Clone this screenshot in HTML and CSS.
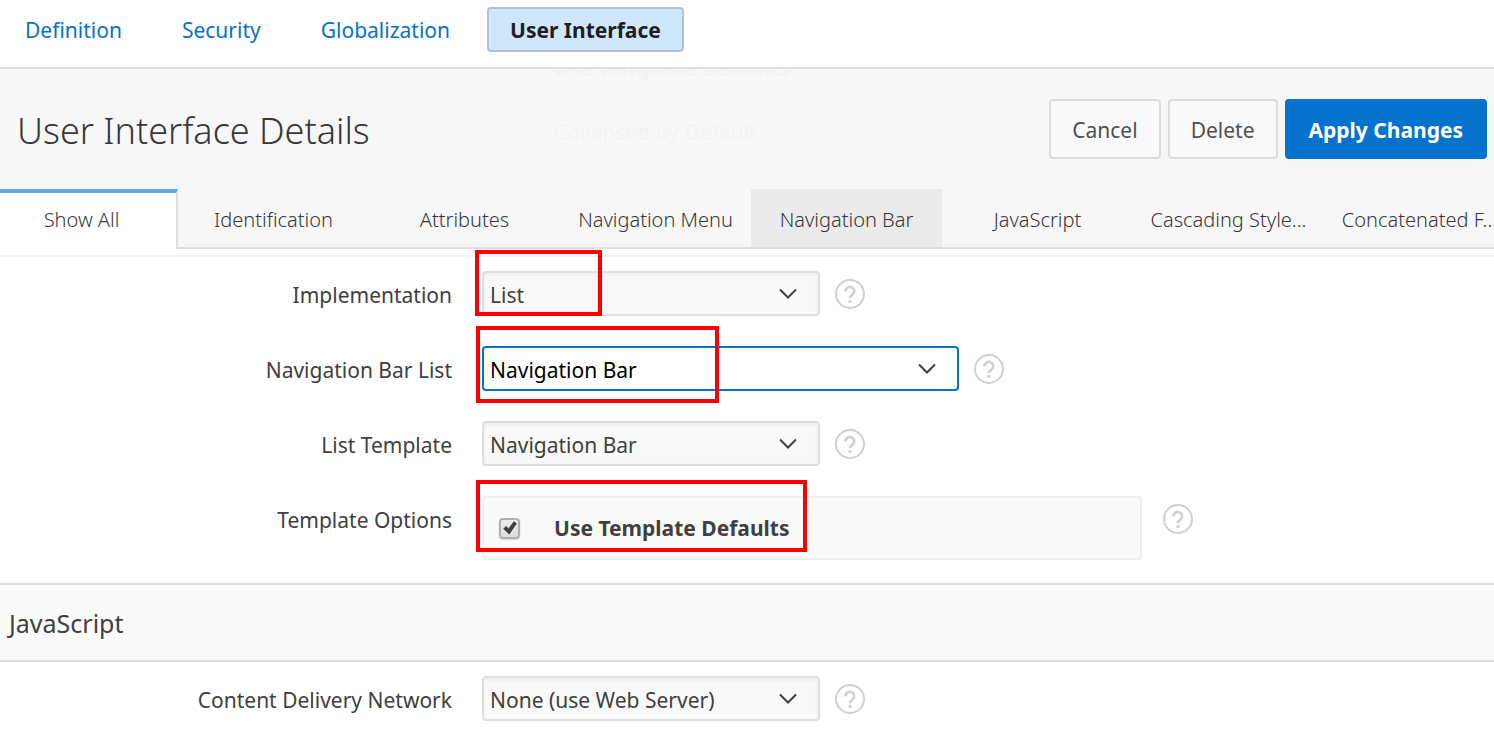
FILE: index.html
```html
<!DOCTYPE html>
<html lang="en">
<head>
    <meta charset="UTF-8">
    <meta name="viewport" content="width=device-width, initial-scale=1.0">
    <title>User Interface Details</title>
    <link rel="stylesheet" href="styles.css">
</head>
<body>
    <!-- Shared icons -->
    <svg class="sprite" width="0" height="0" aria-hidden="true">
        <symbol id="icon-help" viewBox="0 0 32 32">
            <circle cx="16" cy="16" r="14" fill="none" stroke="currentColor" stroke-width="2"/>
            <path d="M11.6 13.4a4.3 4.3 0 1 1 7 3.1c-1.6 1.2-2.6 1.7-2.6 3.7" fill="none" stroke="currentColor" stroke-width="2.6"/>
            <circle cx="16" cy="23.4" r="1.7" fill="currentColor"/>
        </symbol>
        <symbol id="icon-down" viewBox="0 0 18 12">
            <path d="M1 1.5l8 8 8-8" fill="none" stroke="currentColor" stroke-width="2"/>
        </symbol>
        <symbol id="icon-check" viewBox="0 0 14 14">
            <path d="M.2 7.8l3-2.7 2.3 2.4L10.9.2l3 2.2L6.3 13.4z" fill="currentColor"/>
        </symbol>
    </svg>

    <nav class="top-nav">
        <a href="#definition">Definition</a>
        <a href="#security">Security</a>
        <a href="#globalization">Globalization</a>
        <a href="#ui" class="active">User Interface</a>
    </nav>

    <header class="page-header">
        <!-- Form content scrolled under the translucent header -->
        <div class="scrolled" aria-hidden="true">
            <div class="scrolled-row"><span class="scrolled-box"></span><b>Use Template Defaults</b></div>
            <div class="scrolled-row"><span class="scrolled-box"></span>Collapsed by Default</div>
        </div>
        <div class="title-bar">
            <h1>User Interface Details</h1>
            <div class="actions">
                <button type="button" class="btn">Cancel</button>
                <button type="button" class="btn">Delete</button>
                <button type="button" class="btn btn-hot">Apply Changes</button>
            </div>
        </div>
        <nav class="tabs">
            <a href="#all" class="selected">Show All</a>
            <a href="#identification">Identification</a>
            <a href="#attributes">Attributes</a>
            <a href="#nav-menu">Navigation Menu</a>
            <a href="#nav-bar" class="hover">Navigation Bar</a>
            <a href="#javascript">JavaScript</a>
            <a href="#css">Cascading Style...</a>
            <a href="#files">Concatenated F...</a>
        </nav>
    </header>

    <main>
        <section class="region" id="nav-bar">
            <div class="field">
                <label for="implementation">Implementation</label>
                <div class="control">
                    <div class="select">
                        <select id="implementation"><option>List</option></select>
                        <svg><use href="#icon-down"/></svg>
                    </div>
                    <button type="button" class="help" aria-label="Help"><svg><use href="#icon-help"/></svg></button>
                    <span class="mark mark-implementation"></span>
                </div>
            </div>
            <div class="field">
                <label for="bar-list">Navigation Bar List</label>
                <div class="control">
                    <div class="select select-wide focused">
                        <select id="bar-list"><option>Navigation Bar</option></select>
                        <svg><use href="#icon-down"/></svg>
                    </div>
                    <button type="button" class="help" aria-label="Help"><svg><use href="#icon-help"/></svg></button>
                    <span class="mark mark-list"></span>
                </div>
            </div>
            <div class="field">
                <label for="template">List Template</label>
                <div class="control">
                    <div class="select">
                        <select id="template"><option>Navigation Bar</option></select>
                        <svg><use href="#icon-down"/></svg>
                    </div>
                    <button type="button" class="help" aria-label="Help"><svg><use href="#icon-help"/></svg></button>
                </div>
            </div>
            <div class="field">
                <span class="label">Template Options</span>
                <div class="control">
                    <div class="options">
                        <span class="checkbox">
                            <input type="checkbox" id="defaults" checked>
                            <svg><use href="#icon-check"/></svg>
                        </span>
                        <label for="defaults">Use Template Defaults</label>
                    </div>
                    <button type="button" class="help" aria-label="Help"><svg><use href="#icon-help"/></svg></button>
                    <span class="mark mark-options"></span>
                </div>
            </div>
        </section>

        <section class="region" id="javascript">
            <h2>JavaScript</h2>
            <div class="field">
                <label for="cdn">Content Delivery Network</label>
                <div class="control">
                    <div class="select">
                        <select id="cdn"><option>None (use Web Server)</option></select>
                        <svg><use href="#icon-down"/></svg>
                    </div>
                    <button type="button" class="help" aria-label="Help"><svg><use href="#icon-help"/></svg></button>
                </div>
            </div>
        </section>
    </main>
</body>
</html>
```

FILE: styles.css
```css
* {
    box-sizing: border-box;
}
body {
    margin: 0;
    background-color: #ffffff;
    color: #404040;
    font-family: "Noto Sans", "Open Sans", sans-serif;
    font-size: 21px;
    line-height: 32px;
    overflow-x: hidden;
}
button, select {
    font: inherit;
    color: inherit;
}
a {
    text-decoration: none;
}
.sprite {
    position: absolute;
}

/* Top navigation */
.top-nav {
    display: flex;
    gap: 14px;
    padding: 7px 2px 15px;
    border-bottom: 2px solid #dfdfdf;
}
.top-nav a {
    height: 45px;
    padding: 5px 21px;
    border: 2px solid transparent;
    border-radius: 4px;
    color: #0572ce;
}
.top-nav .active {
    background-color: #d0e6fa;
    border-color: #adc3d8;
    color: #202020;
    font-weight: bold;
}

/* Page header */
.page-header {
    position: relative;
    background-color: #f7f7f7;
}
.title-bar {
    position: relative;
    display: flex;
    justify-content: space-between;
    align-items: center;
    height: 120px;
    padding: 0 7px 0 17px;
}
h1 {
    margin: 0;
    padding-top: 4px;
    color: #383838;
    font-size: 36px;
    font-weight: 300;
    line-height: 48px;
}
.actions {
    display: flex;
    gap: 7px;
}
.btn {
    height: 60px;
    padding: 2px 21px 0;
    border: 2px solid #dcdcdc;
    border-radius: 4px;
    background-color: #f9f9f9;
    color: #505050;
}
.btn-hot {
    padding: 2px 22px 0;
    border-color: #0572ce;
    background-color: #0572ce;
    color: #ffffff;
    font-weight: bold;
}
.scrolled {
    position: absolute;
    inset: 0;
    overflow: hidden;
    padding-left: 499px;
    color: #f3f3f3;
}
.scrolled-row {
    display: flex;
    align-items: center;
    gap: 34px;
    height: 64px;
    margin-top: -33px;
}
.scrolled-row + .scrolled-row {
    margin-top: 0;
}
.scrolled-box {
    width: 21px;
    height: 21px;
    border: 1px solid #f4f4f4;
    border-radius: 4px;
}

/* Tabs */
.tabs {
    position: relative;
    display: flex;
    overflow: hidden;
    height: 60px;
    box-shadow: inset 0 -2px #dfdfdf;
}
.tabs a {
    flex: 0 0 191px;
    height: 58px;
    padding-top: 15px;
    color: #383838;
    font-size: 20px;
    font-weight: 300;
    text-align: center;
    white-space: nowrap;
}
.tabs .selected {
    height: 60px;
    margin-left: -13px;
    padding-top: 11px;
    border-top: 4px solid #68a8e2;
    border-right: 2px solid #dfdfdf;
    background-color: #ffffff;
}
.tabs .hover {
    background-color: #ebebeb;
}

/* Form fields */
#nav-bar {
    margin-top: 6px;
    border-top: 2px solid #f3f3f3;
}
.region {
    padding-bottom: 23px;
}
.field {
    display: grid;
    grid-template-columns: 452px 1fr;
    gap: 30px;
    margin-top: 30px;
}
.field:first-child {
    margin-top: 14px;
}
.field > label, .field > .label {
    padding-top: 8px;
    text-align: right;
}
.control {
    position: relative;
    display: flex;
    align-items: flex-start;
    gap: 14px;
}
.select {
    display: grid;
    align-items: center;
    width: 338px;
    height: 45px;
}
.select-wide {
    width: 477px;
}
.select select, .select svg {
    grid-area: 1 / 1;
}
.select select {
    appearance: none;
    width: 100%;
    height: 45px;
    padding: 2px 6px 0;
    border: 2px solid #dfdfdf;
    border-radius: 4px;
    outline: none;
    background-color: #f9f9f9;
    box-shadow: inset 0 2px 4px rgba(0, 0, 0, 0.05);
}
.select svg {
    justify-self: end;
    width: 18px;
    height: 12px;
    margin-right: 23px;
    pointer-events: none;
}
.select .focused select, .focused select {
    border-color: #0572ce;
    background-color: #ffffff;
    box-shadow: none;
    color: #000000;
}
.help {
    width: 32px;
    height: 32px;
    margin-top: 7px;
    padding: 0;
    border: 0;
    background: none;
    color: #d0d0d0;
}
.help svg {
    display: block;
    width: 32px;
    height: 32px;
}
.options {
    display: flex;
    align-items: center;
    gap: 34px;
    width: 660px;
    height: 64px;
    padding-left: 15px;
    border: 2px solid #efefef;
    border-radius: 4px;
    background-color: #fafafa;
    font-weight: bold;
}
.options + .help {
    margin-left: 6px;
}
.checkbox {
    display: grid;
    place-items: center;
}
.checkbox input, .checkbox svg {
    grid-area: 1 / 1;
}
.checkbox input {
    appearance: none;
    width: 21px;
    height: 21px;
    margin: 0;
    border: 2px solid #b0b0b0;
    border-radius: 4px;
    background: linear-gradient(#ededed, #dcdcdc);
    box-shadow: 0 1px 2px rgba(0, 0, 0, 0.15);
}
.checkbox svg {
    width: 14px;
    height: 14px;
    pointer-events: none;
}

/* Red highlights */
.mark {
    position: absolute;
    border: 4px solid #ff0000;
    pointer-events: none;
}
.mark-implementation {
    left: -7px;
    top: -21px;
    width: 127px;
    height: 66px;
}
.mark-list {
    left: -6px;
    top: -20px;
    width: 243px;
    height: 77px;
}
.mark-options {
    left: -6px;
    top: -16px;
    width: 331px;
    height: 72px;
}

/* Section heading */
h2 {
    margin: 0 0 14px;
    padding: 22px 9px 21px;
    border-top: 2px solid #dfdfdf;
    border-bottom: 2px solid #dfdfdf;
    background-color: #fafafa;
    font-size: 25px;
    font-weight: normal;
    line-height: 32px;
}
h2 + .field {
    margin-top: 0;
}
```
